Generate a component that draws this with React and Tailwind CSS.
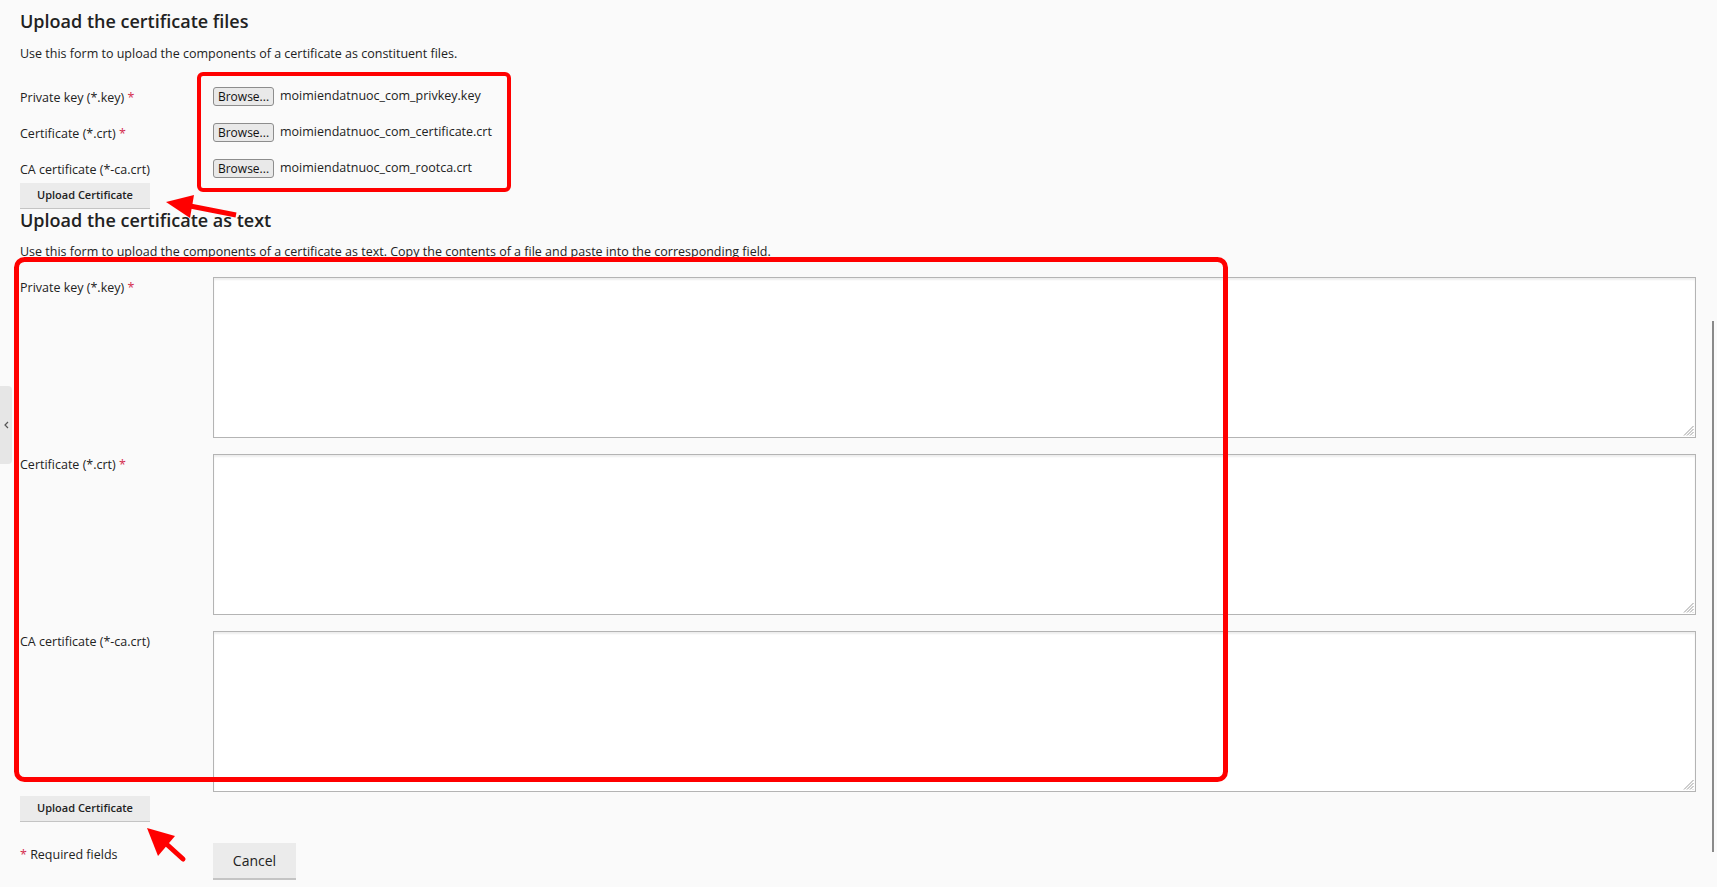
import React from 'react';

const Req = () => <span className="text-[#d42b4d]"> *</span>;

const Grip = () => (
  <svg
    className="pointer-events-none absolute bottom-[2px] right-[2px]"
    width="11"
    height="11"
    viewBox="0 0 11 11"
  >
    <g stroke="#9a9a9a" strokeWidth="1">
      <line x1="10.5" y1="1" x2="1" y2="10.5" />
      <line x1="10.5" y1="4" x2="4" y2="10.5" />
      <line x1="10.5" y1="7" x2="7" y2="10.5" />
      <line x1="10.5" y1="10" x2="10" y2="10.5" />
    </g>
  </svg>
);

const FileRow = ({ label, required, fileName }) => (
  <div className="flex h-9 items-center">
    <label className="w-[193px] pt-[3px] text-[12.5px] leading-[18px]">
      {label}
      {required && <Req />}
    </label>
    <div className="flex items-center">
      <button
        type="button"
        className="h-[19px] w-[61px] rounded-[3px] border border-[#8d8d8d] bg-[#e9e9e9] text-[12px] leading-[17px] text-[#111]"
      >
        Browse...
      </button>
      <span className="ml-[6px] text-[12.5px] leading-[18px]">{fileName}</span>
    </div>
  </div>
);

const TextRow = ({ label, required }) => (
  <div className="flex">
    <label className="w-[193px] shrink-0 pt-[2px] text-[12.5px] leading-[18px]">
      {label}
      {required && <Req />}
    </label>
    <div className="relative flex-1">
      <textarea className="block h-[161px] w-full resize-none border border-[#b4b4b4] bg-white shadow-[inset_0_2px_2px_rgba(0,0,0,0.07)] outline-none" />
      <Grip />
    </div>
  </div>
);

const UploadButton = ({ className }) => (
  <button
    type="button"
    className={
      'block h-[25px] w-[130px] bg-[#ebebeb] text-[11px] font-semibold text-[#222] shadow-[0_1px_0_#c4c4c4] ' +
      className
    }
  >
    Upload Certificate
  </button>
);

// red callouts drawn over the form
const Callouts = () => (
  <svg
    className="pointer-events-none absolute left-0 top-0"
    width="1717"
    height="887"
    viewBox="0 0 1717 887"
  >
    <rect x="199" y="74" width="310" height="116" rx="4" fill="none" stroke="#ff0000" strokeWidth="4" />
    <rect x="16.5" y="259.5" width="1209" height="520" rx="8" fill="none" stroke="#ff0000" strokeWidth="5" />
    <line x1="236" y1="215" x2="185" y2="205" stroke="#ff0000" strokeWidth="5" />
    <polygon points="166,202 194,195 190,218" fill="#ff0000" />
    <line x1="183" y1="859" x2="162" y2="840" stroke="#ff0000" strokeWidth="5" strokeLinecap="round" />
    <polygon points="147,828 175,836 158,856" fill="#ff0000" />
  </svg>
);

export default function App() {
  return (
    <div className="relative h-[887px] overflow-hidden bg-[#fafafa] pl-5 pr-[21px] pt-[9px] font-['Open_Sans',sans-serif] text-[#222]">
      <h2 className="text-[18px] font-semibold leading-[24px]">Upload the certificate files</h2>
      <p className="mt-[12px] text-[12.5px] leading-[18px]">
        Use this form to upload the components of a certificate as constituent files.
      </p>
      <div className="mt-[15px]">
        <FileRow label="Private key (*.key)" required fileName="moimiendatnuoc_com_privkey.key" />
        <FileRow label="Certificate (*.crt)" required fileName="moimiendatnuoc_com_certificate.crt" />
        <FileRow label="CA certificate (*-ca.crt)" fileName="moimiendatnuoc_com_rootca.crt" />
      </div>
      <UploadButton className="-mt-[3px]" />

      <h2 className="text-[18px] font-semibold leading-[24px]">Upload the certificate as text</h2>
      <p className="mt-[11px] text-[12.5px] leading-[18px]">
        Use this form to upload the components of a certificate as text. Copy the contents of a file and paste into the corresponding field.
      </p>
      <div className="mt-[16px] flex flex-col gap-4">
        <TextRow label="Private key (*.key)" required />
        <TextRow label="Certificate (*.crt)" required />
        <TextRow label="CA certificate (*-ca.crt)" />
      </div>
      <UploadButton className="mt-[4px]" />

      <div className="mt-[22px] flex items-start">
        <div className="w-[193px] pt-[3px] text-[12.5px] leading-[18px]">
          <span className="text-[#d42b4d]">*</span> Required fields
        </div>
        <button
          type="button"
          className="h-[35px] w-[83px] bg-[#ebebeb] text-[14px] text-[#222] shadow-[0_2px_0_#c4c4c4]"
        >
          Cancel
        </button>
      </div>

      {/* collapsed side panel handle */}
      <div className="absolute left-0 top-[386px] flex h-[78px] w-[12px] items-center justify-center rounded-r-[4px] bg-[#e6e6e6]">
        <svg width="5" height="8" viewBox="0 0 5 8">
          <path d="M4 1 L1 4 L4 7" fill="none" stroke="#555" strokeWidth="1.2" />
        </svg>
      </div>
      {/* scrollbar thumb */}
      <div className="absolute right-[3px] top-[321px] h-[531px] w-[2px] bg-[#8a8a8a]" />

      <Callouts />
    </div>
  );
}
